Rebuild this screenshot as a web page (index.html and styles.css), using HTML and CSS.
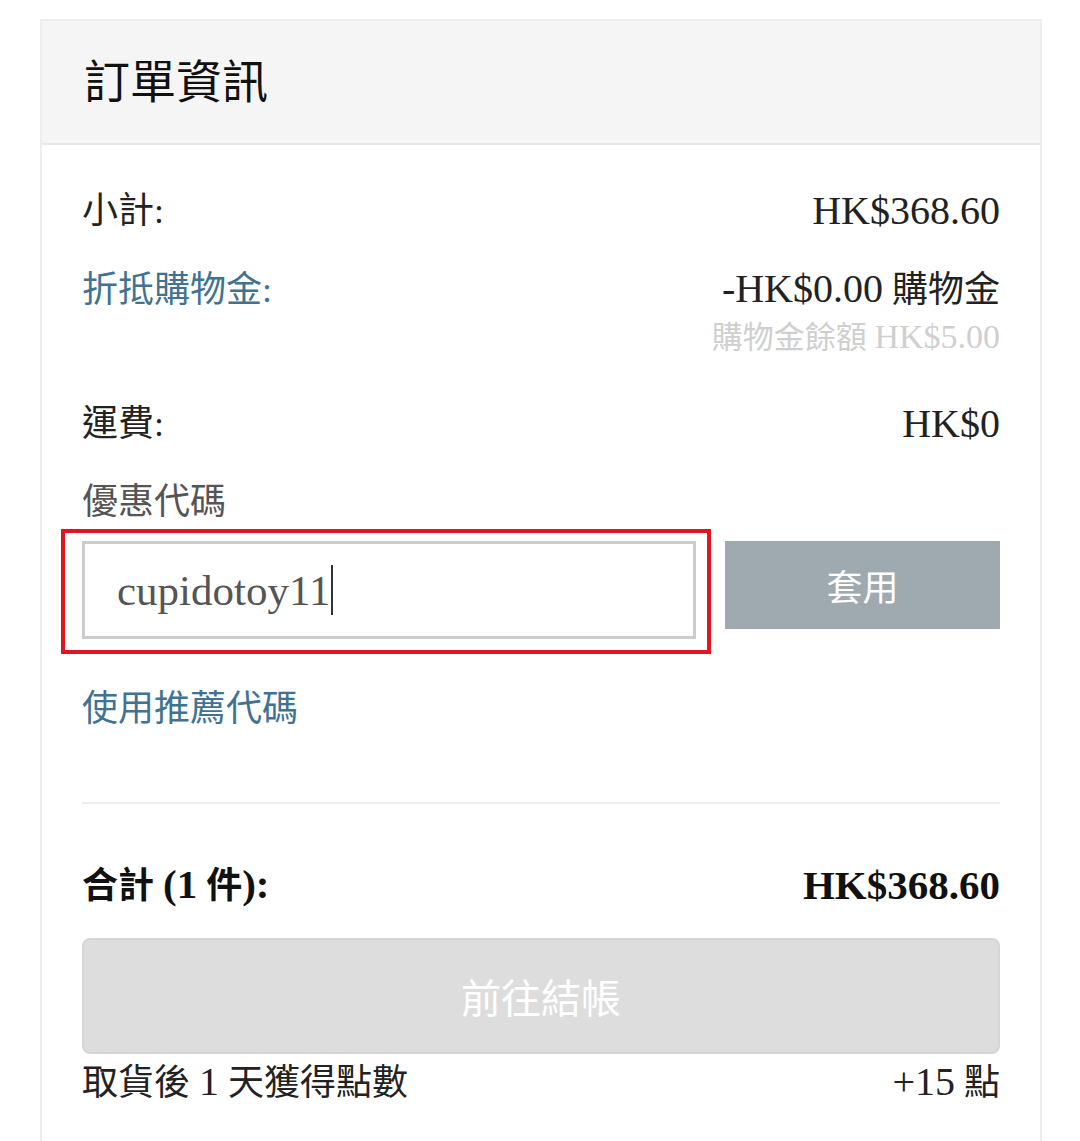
FILE: index.html
```html
<!DOCTYPE html>
<html lang="zh-Hant">
<head>
    <meta charset="UTF-8">
    <meta name="viewport" content="width=device-width, initial-scale=1.0">
    <title>訂單資訊</title>
    <link rel="stylesheet" href="styles.css">
</head>
<body>
    <div class="card">
        <div class="card-header">訂單資訊</div>

        <div class="card-body">
            <div class="row">
                <span>小計:</span>
                <span class="num">HK$368.60</span>
            </div>

            <div class="row credit">
                <span class="link">折抵購物金:</span>
                <span><span class="num">-HK$0.00</span> 購物金</span>
            </div>
            <div class="balance">購物金餘額 <span class="num">HK$5.00</span></div>

            <div class="row shipping">
                <span>運費:</span>
                <span class="num">HK$0</span>
            </div>

            <div class="coupon-label">優惠代碼</div>
            <div class="coupon-form">
                <div class="coupon-input-wrap">
                    <div class="coupon-input">cupidotoy11<span class="caret"></span></div>
                    <span class="highlight"></span>
                </div>
                <button class="apply-btn">套用</button>
            </div>

            <div class="link referral">使用推薦代碼</div>

            <hr class="divider">

            <div class="row total">
                <span>合計 <span class="num">(1</span> 件<span class="num">):</span></span>
                <span class="num">HK$368.60</span>
            </div>

            <button class="checkout-btn">前往結帳</button>

            <div class="row points">
                <span>取貨後 <span class="num">1</span> 天獲得點數</span>
                <span><span class="num">+15</span> 點</span>
            </div>
        </div>
    </div>
</body>
</html>
```

FILE: styles.css
```css
body {
    margin: 0;
    background-color: white;
    font-family: "Liberation Serif", "Noto Sans CJK TC", serif;
    color: #222;
}
.card {
    margin: 19px 38px 0 40px;
    border: 2px solid #eee;
    border-bottom: none;
    box-sizing: border-box;
    height: calc(100vh - 19px);
    overflow: hidden;
}
.card-header {
    height: 124px;
    padding: 0 0 8px 42px;
    box-sizing: border-box;
    display: flex;
    align-items: center;
    background-color: #f5f5f5;
    border-bottom: 2px solid #e8e8e8;
    font-size: 46px;
    color: #111;
}
.card-body {
    padding: 42px 40px 0 40px;
}
.row {
    display: flex;
    justify-content: space-between;
    align-items: center;
    font-size: 36px;
    line-height: 48px;
}
.num {
    font-size: 40px;
}
.link {
    color: #3f7391;
}
.credit {
    margin-top: 30px;
}
.balance {
    margin-top: 3px;
    text-align: right;
    font-size: 31px;
    line-height: 40px;
    color: #cfcfcf;
}
.balance .num {
    font-size: 34px;
}
.shipping {
    margin-top: 42px;
}
.coupon-label {
    margin-top: 30px;
    font-size: 36px;
    line-height: 48px;
    color: #555;
}
.coupon-form {
    margin-top: 15px;
    display: flex;
    align-items: flex-start;
    gap: 29px;
}
.coupon-input-wrap {
    position: relative;
    flex: 0 0 614px;
}
.coupon-input {
    height: 92px;
    padding-left: 32px;
    display: flex;
    align-items: center;
    border: 3px solid #ccc;
    font-size: 43px;
    color: #555;
}
.caret {
    display: inline-block;
    width: 2px;
    height: 50px;
    margin-left: 1px;
    background-color: #333;
}
.highlight {
    position: absolute;
    top: -12px;
    left: -21px;
    right: -15px;
    bottom: -15px;
    border: 4px solid #e2141f;
}
.apply-btn {
    flex: 1;
    height: 88px;
    border: none;
    background-color: #9eaab0;
    color: white;
    font-family: inherit;
    font-size: 36px;
}
.referral {
    margin-top: 46px;
    font-size: 36px;
    line-height: 48px;
}
.divider {
    margin: 69px 0 0 0;
    border: none;
    border-top: 2px solid #eee;
}
.total {
    margin-top: 56px;
    font-weight: bold;
    color: #111;
}
.total .num {
    font-size: 41px;
}
.checkout-btn {
    display: block;
    width: 100%;
    height: 116px;
    margin-top: 28px;
    border: 2px solid #d6d6d6;
    border-radius: 8px;
    background-color: #dddddd;
    color: white;
    font-family: inherit;
    font-size: 40px;
}
.points {
    margin-top: 4px;
}
```
